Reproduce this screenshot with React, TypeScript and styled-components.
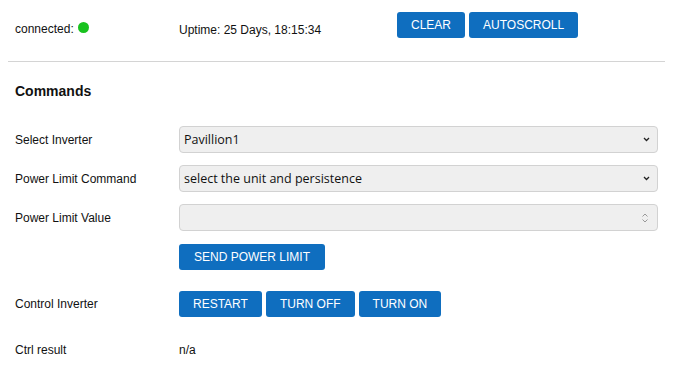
import React from "react";
import styled, { createGlobalStyle } from "styled-components";

const GlobalStyle = createGlobalStyle`
  html, body {
    margin: 0;
    padding: 0;
    background: #fff;
  }
  body {
    font-family: "Liberation Sans", Arial, sans-serif;
    font-size: 12px;
    color: #111;
  }
`;

function App() {
  return (
    <>
      <GlobalStyle />
      <Page>
        <TopBar>
          <Status>
            connected: <Dot />
          </Status>
          <Uptime>Uptime: 25 Days, 18:15:34</Uptime>
          <ButtonGroup>
            <Button>CLEAR</Button>
            <Button>AUTOSCROLL</Button>
          </ButtonGroup>
        </TopBar>
        <Divider />
        <Section>
          <Heading>Commands</Heading>
          <Row>
            <Label>Select Inverter</Label>
            <Select defaultValue="p1">
              <option value="p1">Pavillion1</option>
            </Select>
          </Row>
          <Row>
            <Label>Power Limit Command</Label>
            <Select defaultValue="">
              <option value="">select the unit and persistence</option>
            </Select>
          </Row>
          <Row>
            <Label>Power Limit Value</Label>
            <NumberField>
              <Spinner viewBox="0 0 8 12">
                <path d="M1.5 4.5 L4 2 L6.5 4.5 M1.5 7.5 L4 10 L6.5 7.5" />
              </Spinner>
            </NumberField>
          </Row>
          <Row $gap={20}>
            <Label />
            <ButtonGroup>
              <Button $wide>SEND POWER LIMIT</Button>
            </ButtonGroup>
          </Row>
          <Row $gap={19}>
            <Label>Control Inverter</Label>
            <ButtonGroup>
              <Button>RESTART</Button>
              <Button>TURN OFF</Button>
              <Button>TURN ON</Button>
            </ButtonGroup>
          </Row>
          <Row>
            <Label>Ctrl result</Label>
            <Value>n/a</Value>
          </Row>
        </Section>
      </Page>
    </>
  );
}

export default App;

const Page = styled.div`
  width: 690px;
  padding-top: 12px;
`;
const TopBar = styled.div`
  display: grid;
  grid-template-columns: 164px 218px auto;
  align-items: center;
  height: 26px;
  padding-left: 15px;
`;
const Status = styled.div`
  display: flex;
  align-items: center;
  gap: 4px;
  font-size: 12px;
  padding-top: 8px;
`;
const Dot = styled.span`
  display: inline-block;
  width: 11px;
  height: 11px;
  border-radius: 50%;
  background: #19c21f;
  margin-top: -3px;
`;
const Uptime = styled.div`
  font-size: 12px;
  padding-top: 10px;
`;
const ButtonGroup = styled.div`
  display: flex;
  gap: 4px;
`;
const Button = styled.button<{ $wide?: boolean }>`
  height: 26px;
  padding: 0 ${(p) => (p.$wide ? "15px" : "14px")};
  border: none;
  border-radius: 3px;
  background: #0f6ebf;
  color: #fff;
  font-family: "Liberation Sans", Arial, sans-serif;
  font-size: 12px;
  cursor: pointer;
`;
const Divider = styled.hr`
  margin: 23px 25px 0 8px;
  border: none;
  border-top: 1px solid #d4d4d4;
`;
const Section = styled.div`
  padding: 19px 0 0 15px;
`;
const Heading = styled.h3`
  margin: 0 0 25px;
  font-size: 14px;
  line-height: 20px;
  font-weight: bold;
`;
const Row = styled.div<{ $gap?: number }>`
  display: grid;
  grid-template-columns: 164px 479px;
  align-items: center;
  min-height: 27px;
  margin-bottom: ${(p) => (p.$gap ?? 12) + "px"};
`;
const Label = styled.div`
  font-size: 12px;
`;
const fieldBox = `
  box-sizing: border-box;
  width: 479px;
  height: 27px;
  border: 1px solid #d2d2d2;
  border-radius: 4px;
  background: #efefef;
`;
const Select = styled.select`
  ${fieldBox}
  padding: 0 4px;
  font-family: "Open Sans", "Noto Sans", sans-serif;
  font-size: 12.5px;
  color: #111;
  appearance: none;
  background-image: url("data:image/svg+xml;utf8,<svg xmlns='http://www.w3.org/2000/svg' width='7' height='5'><path d='M1 1 L3.5 3.5 L6 1' fill='none' stroke='%23222' stroke-width='1.3'/></svg>");
  background-repeat: no-repeat;
  background-position: right 7px center;
`;
const NumberField = styled.div`
  ${fieldBox}
  display: flex;
  align-items: center;
  justify-content: flex-end;
  padding-right: 8px;
`;
const Spinner = styled.svg`
  width: 8px;
  height: 12px;
  fill: none;
  stroke: #999;
  stroke-width: 1;
`;
const Value = styled.div`
  font-size: 12px;
`;
